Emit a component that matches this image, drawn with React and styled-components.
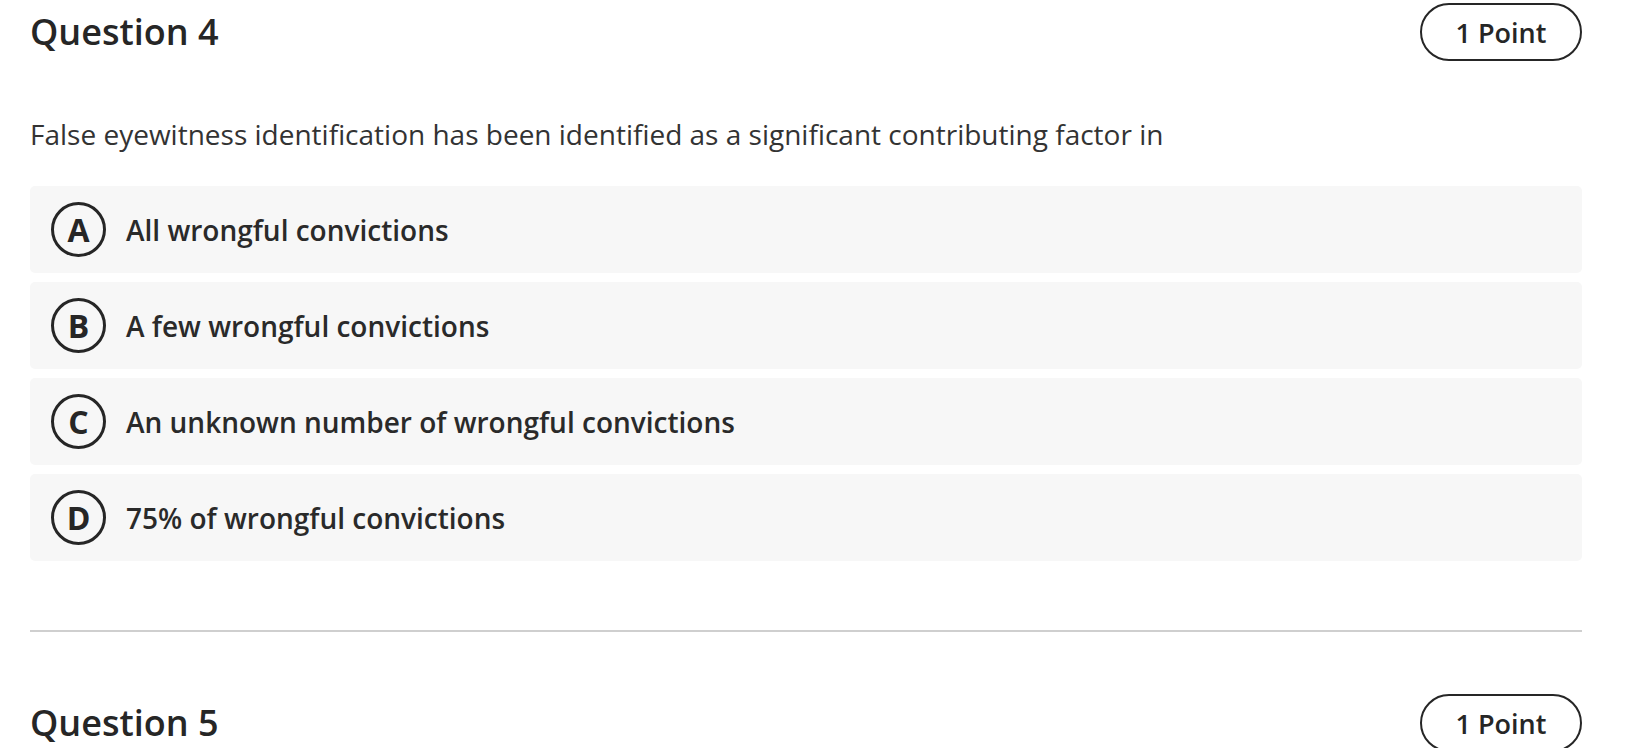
import React from 'react';
import styled, { createGlobalStyle } from 'styled-components';

const GlobalStyle = createGlobalStyle`
  * { box-sizing: border-box; }
  body {
    margin: 0;
    background: #fff;
    font-family: "Open Sans", "Noto Sans", sans-serif;
    color: #262626;
  }
`;

const Page = styled.div`
  padding: 3px 46px 0 30px;
`;

const Question = styled.section`
  display: flex;
  flex-direction: column;
`;

const Header = styled.div`
  display: flex;
  align-items: center;
  justify-content: space-between;
  height: 58px;
`;

const Title = styled.h2`
  margin: 0;
  font-size: 36px;
  font-weight: 600;
  line-height: 1;
  color: #262626;
`;

const Pill = styled.div`
  width: 162px;
  height: 58px;
  border: 2px solid #262626;
  border-radius: 29px;
  display: flex;
  align-items: center;
  justify-content: center;
  font-size: 27px;
  font-weight: 600;
  color: #262626;
`;

const Prompt = styled.p`
  margin: 53px 0 32px;
  font-size: 28px;
  line-height: 40px;
  font-weight: 400;
  color: #333;
`;

const Options = styled.div`
  display: flex;
  flex-direction: column;
  gap: 9px;
`;

const Option = styled.div`
  height: 87px;
  display: flex;
  align-items: center;
  gap: 20px;
  padding-left: 21px;
  background: #f7f7f7;
  border-radius: 5px;
`;

const Letter = styled.span`
  width: 55px;
  height: 55px;
  flex: none;
  border: 3px solid #262626;
  border-radius: 50%;
  display: flex;
  align-items: center;
  justify-content: center;
  font-size: 32px;
  font-weight: 700;
  line-height: 1;
`;

const Answer = styled.span`
  font-size: 28px;
  font-weight: 600;
  color: #2a2a2a;
`;

const Divider = styled.hr`
  margin: 69px 0 62px;
  border: none;
  height: 2px;
  background: #cfcfcf;
`;

const answers = [
  ['A', 'All wrongful convictions'],
  ['B', 'A few wrongful convictions'],
  ['C', 'An unknown number of wrongful convictions'],
  ['D', '75% of wrongful convictions'],
];

export default function App() {
  return (
    <>
      <GlobalStyle />
      <Page>
        <Question>
          <Header>
            <Title>Question 4</Title>
            <Pill>1 Point</Pill>
          </Header>
          <Prompt>
            False eyewitness identification has been identified as a significant contributing factor in
          </Prompt>
          <Options>
            {answers.map(([key, text]) => (
              <Option key={key}>
                <Letter>{key}</Letter>
                <Answer>{text}</Answer>
              </Option>
            ))}
          </Options>
        </Question>
        <Divider />
        <Question>
          <Header>
            <Title>Question 5</Title>
            <Pill>1 Point</Pill>
          </Header>
        </Question>
      </Page>
    </>
  );
}
